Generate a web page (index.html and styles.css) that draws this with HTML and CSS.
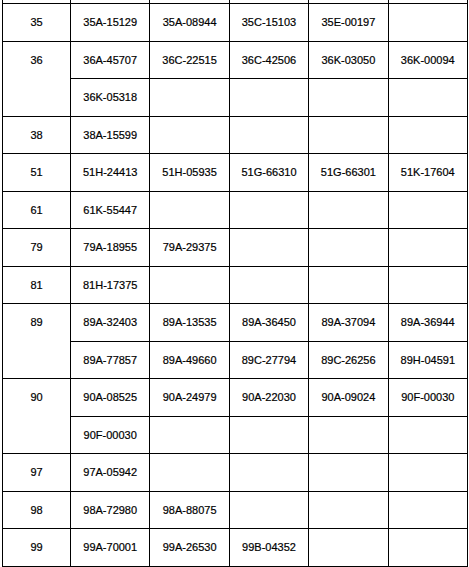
FILE: index.html
```html
<!DOCTYPE html>
<html>
<head>
<meta charset="utf-8">
<link rel="stylesheet" href="styles.css">
</head>
<body>
<div class="page">
<table class="plates">
<colgroup><col class="c-code"><col><col><col><col><col></colgroup>
<tr class="prev"><td></td><td></td><td></td><td></td><td></td><td></td></tr>
<tr><td class="code">35</td><td>35A-15129</td><td>35A-08944</td><td>35C-15103</td><td>35E-00197</td><td></td></tr>
<tr><td class="code" rowspan="2">36</td><td>36A-45707</td><td>36C-22515</td><td>36C-42506</td><td>36K-03050</td><td>36K-00094</td></tr>
<tr><td>36K-05318</td><td></td><td></td><td></td><td></td></tr>
<tr><td class="code">38</td><td>38A-15599</td><td></td><td></td><td></td><td></td></tr>
<tr><td class="code">51</td><td>51H-24413</td><td>51H-05935</td><td>51G-66310</td><td>51G-66301</td><td>51K-17604</td></tr>
<tr><td class="code">61</td><td>61K-55447</td><td></td><td></td><td></td><td></td></tr>
<tr><td class="code">79</td><td>79A-18955</td><td>79A-29375</td><td></td><td></td><td></td></tr>
<tr><td class="code">81</td><td>81H-17375</td><td></td><td></td><td></td><td></td></tr>
<tr><td class="code" rowspan="2">89</td><td>89A-32403</td><td>89A-13535</td><td>89A-36450</td><td>89A-37094</td><td>89A-36944</td></tr>
<tr><td>89A-77857</td><td>89A-49660</td><td>89C-27794</td><td>89C-26256</td><td>89H-04591</td></tr>
<tr><td class="code" rowspan="2">90</td><td>90A-08525</td><td>90A-24979</td><td>90A-22030</td><td>90A-09024</td><td>90F-00030</td></tr>
<tr><td>90F-00030</td><td></td><td></td><td></td><td></td></tr>
<tr><td class="code">97</td><td>97A-05942</td><td></td><td></td><td></td><td></td></tr>
<tr><td class="code">98</td><td>98A-72980</td><td>98A-88075</td><td></td><td></td><td></td></tr>
<tr><td class="code">99</td><td>99A-70001</td><td>99A-26530</td><td>99B-04352</td><td></td><td></td></tr>
</table>
<div class="trail"></div>
</div>
</body>
</html>
```

FILE: styles.css
```css
html, body {
  margin: 0;
  padding: 0;
  background: #ffffff;
  overflow: hidden;
}

.page {
  padding-left: 2px;
}

.plates {
  border-collapse: collapse;
  table-layout: fixed;
  width: 466px;
  margin-top: -35px;
  font-family: "Liberation Sans", Arial, sans-serif;
  font-size: 11px;
  color: #000000;
  -webkit-text-stroke: 0.2px #000000;
}

.c-code {
  width: 68px;
}

.plates tr {
  height: 37.5px;
}

.plates tr.prev {
  height: 38px;
}

.plates td {
  border: 1px solid #000000;
  padding: 0;
  text-align: center;
  vertical-align: top;
  line-height: 36px;
  white-space: nowrap;
}

.trail {
  margin-left: 138px;
  width: 328px;
  height: 1px;
  background: #d6f7f7;
}
```
